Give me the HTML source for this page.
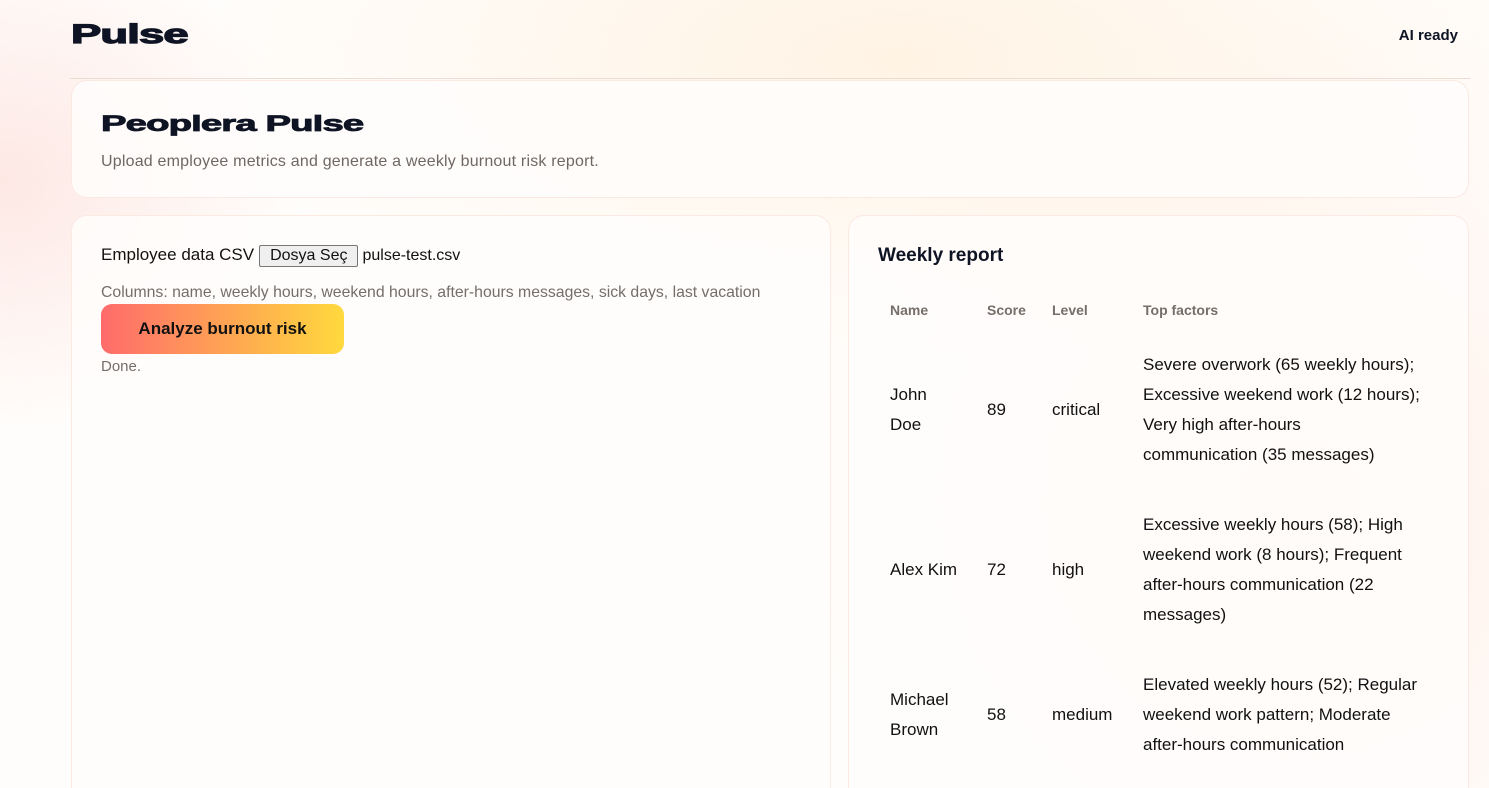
<!DOCTYPE html>
<html><head><meta charset="utf-8"><style>
*{margin:0;padding:0;box-sizing:border-box}
html{width:1489px;height:788px;overflow:hidden}
body{width:1489px;height:788px;overflow:hidden;font-family:"Liberation Sans",sans-serif;color:#111;
background:radial-gradient(ellipse 300px 250px at 0px 180px,#fde8e4 0%,rgba(255,255,255,0) 100%),radial-gradient(ellipse 700px 300px at 900px 60px,#fff3e4 0%,rgba(255,255,255,0) 100%),radial-gradient(ellipse 500px 500px at 1300px 500px,#fff1ea 0%,rgba(255,255,255,0) 100%),#fffdfb;position:relative}
.logo{position:absolute;left:71px;top:19px;font-weight:900;font-size:27px;color:#0e1424;transform:scaleX(1.68);transform-origin:left;letter-spacing:-0.5px;-webkit-text-stroke:1.2px #0e1424}
.ai{position:absolute;right:31px;top:27px;font-weight:bold;font-size:15px;color:#0e1424}
.line{position:absolute;left:70px;top:78px;width:1400px;height:1px;background:#ecdcd4}
.card{position:absolute;background:rgba(255,253,251,0.85);border:1px solid #fbe9e2;border-radius:16px}
h1{position:absolute;left:101px;top:111px;font-size:22px;font-weight:900;color:#0e1424;transform:scaleX(1.74);transform-origin:left;letter-spacing:-0.5px;-webkit-text-stroke:0.8px #0e1424}
.sub{position:absolute;left:101px;top:153px;font-size:16px;letter-spacing:0.2px;color:#6f6763}
.t{position:absolute;white-space:nowrap}
.btn{position:absolute;left:101px;top:304px;width:243px;height:50px;border-radius:11px;background:linear-gradient(90deg,#ff6b6b,#ffd93d);font-weight:bold;font-size:17px;color:#111;display:flex;align-items:center;justify-content:center}
.fb{display:inline-block;border:1px solid #777;background:#efefef;border-radius:2px;padding:1px 10px;font-size:16px;margin:0 4px 0 5px}
table{position:absolute;left:878px;top:290px;border-collapse:collapse;font-size:17px;color:#111}
th{font-size:14px;color:#756e6a;text-align:left;font-weight:bold;padding:0 12px;height:40px}
td{padding:20px 12px;line-height:30px;vertical-align:middle}
</style></head><body>
<div class="logo">Pulse</div>
<div class="ai">AI ready</div>
<div class="line"></div>
<div class="card" style="left:71px;top:80px;width:1398px;height:118px"></div>
<h1>Peoplera Pulse</h1>
<div class="sub">Upload employee metrics and generate a weekly burnout risk report.</div>
<div class="card" style="left:71px;top:215px;width:760px;height:590px"></div>
<div class="card" style="left:848px;top:215px;width:621px;height:590px"></div>
<div class="t" style="left:101px;top:245px;font-size:17px">Employee data CSV<span class="fb">Dosya Seç</span><span style="font-size:16px">pulse-test.csv</span></div>
<div class="t" style="left:101px;top:284px;font-size:15.8px;color:#756e6a">Columns: name, weekly hours, weekend hours, after-hours messages, sick days, last vacation</div>
<div class="btn">Analyze burnout risk</div>
<div class="t" style="left:101px;top:358px;font-size:15px;color:#756e6a">Done.</div>
<div class="t" style="left:878px;top:245px;font-size:19px;font-weight:bold;color:#0e1424">Weekly report</div>
<table>
<tr><th style="width:97px">Name</th><th style="width:65px">Score</th><th style="width:91px">Level</th><th>Top factors</th></tr>
<tr><td>John<br>Doe</td><td>89</td><td>critical</td><td style="width:310px">Severe overwork (65 weekly hours);<br>Excessive weekend work (12 hours);<br>Very high after-hours<br>communication (35 messages)</td></tr>
<tr><td>Alex Kim</td><td>72</td><td>high</td><td>Excessive weekly hours (58); High<br>weekend work (8 hours); Frequent<br>after-hours communication (22<br>messages)</td></tr>
<tr><td>Michael<br>Brown</td><td>58</td><td>medium</td><td>Elevated weekly hours (52); Regular<br>weekend work pattern; Moderate<br>after-hours communication</td></tr>
</table>
</body></html>
